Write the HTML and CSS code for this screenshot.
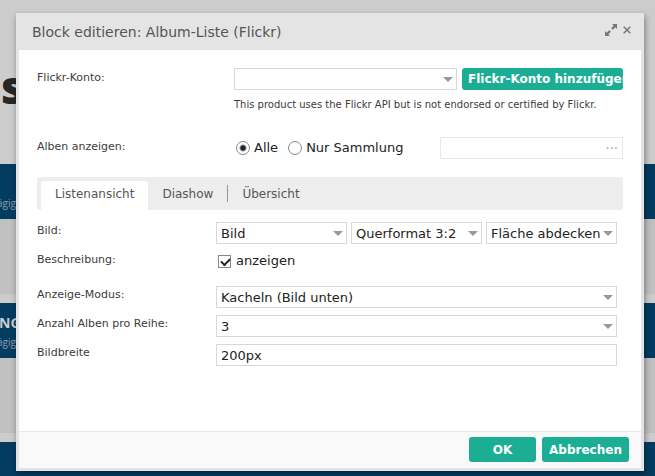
FILE: index.html
```html
<!DOCTYPE html>
<html lang="de">
<head>
<meta charset="utf-8">
<title>Block editieren: Album-Liste (Flickr)</title>
<link rel="stylesheet" href="styles.css">
</head>
<body>
<div class="page">
  <div class="page-head"><span class="page-title">s</span></div>
  <div class="band"><span class="band-text">ägig!</span></div>
  <div class="photo"></div>
  <div class="band"><b class="band-title">NG</b><span class="band-text">ägig.</span></div>
  <div class="photo"></div>
  <div class="band"></div>
</div>

<form class="dialog" role="dialog" aria-labelledby="dialog-title">
  <header class="dialog-head">
    <h1 class="dialog-title" id="dialog-title">Block editieren: Album-Liste (Flickr)</h1>
    <button class="icon-button" type="button" aria-label="Maximieren">
      <svg width="12" height="12" viewBox="0 0 12 12"><path d="M7 0h5v5zM0 7l5 5H0z" fill="#777"/><path d="M10 2L7 5M5 7l-3 3" stroke="#777" stroke-width="2.4"/></svg>
    </button>
    <button class="icon-button" type="button" aria-label="Schließen">
      <svg width="8" height="8" viewBox="0 0 8 8"><path d="M.7.7l6.6 6.6M7.3.7L.7 7.3" stroke="#777" stroke-width="1.5"/></svg>
    </button>
  </header>

  <main class="dialog-body">
    <section class="account">
      <label class="label" for="account">Flickr-Konto:</label>
      <div class="account-field">
        <div class="line">
          <span class="select grow"><select id="account"><option></option></select></span>
          <button class="button add-button" type="button">Flickr-Konto hinzufügen</button>
        </div>
        <p class="note">This product uses the Flickr API but is not endorsed or certified by Flickr.</p>
      </div>
      <span class="label" id="albums">Alben anzeigen:</span>
      <div class="line" role="radiogroup" aria-labelledby="albums">
        <label class="choice"><input class="radio" type="radio" name="albums" checked>Alle</label>
        <label class="choice"><input class="radio" type="radio" name="albums">Nur Sammlung</label>
        <input class="text picker" type="text" placeholder="···" aria-label="Sammlung">
      </div>
    </section>

    <nav class="tabs">
      <a class="tab active" href="#liste">Listenansicht</a>
      <a class="tab" href="#diashow">Diashow</a>
      <a class="tab divided" href="#uebersicht">Übersicht</a>
    </nav>

    <section class="options" id="liste">
      <label class="label" for="image">Bild:</label>
      <div class="line image-line">
        <span class="select"><select id="image"><option>Bild</option></select></span>
        <span class="select"><select aria-label="Format"><option>Querformat 3:2</option></select></span>
        <span class="select"><select aria-label="Skalierung"><option>Fläche abdecken</option></select></span>
      </div>
      <label class="label" for="description">Beschreibung:</label>
      <div class="line check-line">
        <input class="check" type="checkbox" id="description" checked>
        <label for="description">anzeigen</label>
      </div>
      <label class="label" for="mode">Anzeige-Modus:</label>
      <span class="select"><select id="mode"><option>Kacheln (Bild unten)</option></select></span>
      <label class="label" for="count">Anzahl Alben pro Reihe:</label>
      <span class="select"><select id="count"><option>3</option></select></span>
      <label class="label" for="width">Bildbreite</label>
      <input class="text" type="text" id="width" value="200px">
    </section>
  </main>

  <footer class="dialog-foot">
    <button class="button ok" type="button">OK</button>
    <button class="button cancel" type="button">Abbrechen</button>
  </footer>
</form>
</body>
</html>
```
FILE: styles.css
```css
* {
  box-sizing: border-box;
}

body {
  margin: 0;
  height: 100vh;
  overflow: hidden;
  position: relative;
  background: #ccc;
  color: #222;
  font: 13px/16px "DejaVu Sans", sans-serif;
}

button, input, select {
  font: inherit;
  color: inherit;
}

/* Page behind the dialog */
.page-head {
  height: 164px;
  padding: 62px 0 0 1px;
}

.page-title {
  font: 800 46px/48px "Open Sans", sans-serif;
  color: #262626;
}

.band {
  display: flex;
  flex-direction: column;
  justify-content: flex-end;
  height: 55px;
  padding-bottom: 8px;
  background: #033c61;
  color: #ccc;
  font-family: "Open Sans", sans-serif;
}

.band-title {
  font-size: 14px;
  line-height: 22px;
  text-indent: -1px;
}

.band-text {
  color: #8a9dac;
  font-size: 10px;
  line-height: 16px;
  text-indent: -3px;
}

.photo {
  height: 75px;
  margin-bottom: 9px;
  background: #c0c0c0;
}

/* Dialog */
.dialog {
  position: absolute;
  inset: 13px 11px 5px 16px;
  display: flex;
  flex-direction: column;
  padding: 0 3px 3px;
  background: #e4e4e4;
  box-shadow: 1px 3px 6px rgba(0, 0, 0, .4);
}

.dialog-head {
  display: flex;
  align-items: center;
  gap: 6px;
  height: 37px;
  padding: 0 10px 3px 13px;
}

.dialog-title {
  flex: 1;
  margin: 0;
  padding-top: 4px;
  color: #555;
  font-size: 14px;
  line-height: 18px;
  font-weight: normal;
}

.icon-button {
  display: flex;
  padding: 0;
  border: 0;
  background: none;
}

.dialog-body {
  flex: 1;
  padding: 18px;
  background: #fff;
}

.account,
.options {
  display: grid;
}

.account {
  grid-template-columns: 197px 1fr;
  row-gap: 25px;
}

.options {
  grid-template-columns: 179px 1fr;
  row-gap: 7px;
  padding: 12px 6px 0 0;
}

.label {
  padding-top: 2px;
  color: #3c3c3c;
  font-size: 11px;
}

.options .label {
  padding-top: 1px;
}

.line {
  display: flex;
  align-items: center;
  gap: 5px;
}

.note {
  margin: 7px 0 0;
  color: #3c3c3c;
  font-size: 10px;
  line-height: 15px;
}

.select {
  position: relative;
  display: block;
}

.grow {
  flex: 1;
}

.select::after {
  content: "";
  position: absolute;
  top: 9px;
  right: 4px;
  width: 10px;
  height: 5px;
  background: #999;
  clip-path: polygon(0 0, 100% 0, 50% 100%);
  pointer-events: none;
}

select,
.text {
  display: block;
  width: 100%;
  height: 22px;
  padding: 0 4px;
  border: 1px solid #d8d8d8;
  border-radius: 0;
  background: #fff;
  appearance: none;
}

.options select,
.options .text {
  padding-top: 1px;
}

.button {
  border: 0;
  border-radius: 3px;
  background: #1bae94;
  color: #fff;
  font-size: 12px;
  font-weight: bold;
}

.add-button {
  width: 161px;
  height: 22px;
  padding: 0 0 0 6px;
  overflow: hidden;
  white-space: nowrap;
  text-align: left;
}

.choice {
  display: flex;
  align-items: center;
  gap: 4px;
  margin-right: 3px;
  white-space: nowrap;
}

.radio,
.check {
  appearance: none;
  margin: 0;
  border: 1px solid #888;
  background: #fff;
}

.radio {
  width: 14px;
  height: 14px;
  margin-left: 2px;
  border-radius: 50%;
}

.radio:checked {
  background: radial-gradient(circle, #222 0 2px, #fff 4px);
}

.picker {
  width: 183px;
  margin-left: auto;
  border-color: #e8e8e8;
}

.picker::placeholder {
  color: #999;
  text-align: right;
  opacity: 1;
}

/* Tabs */
.tabs {
  display: flex;
  height: 33px;
  margin-top: 18px;
  padding: 4px 4px 0;
  border-radius: 3px;
  background: #ededed;
}

.tab {
  padding: 4px 14px 0;
  color: #555;
  font-size: 12px;
  line-height: 18px;
  text-decoration: none;
}

.active {
  border-radius: 3px 3px 0 0;
  background: #fff;
}

.divided {
  height: 17px;
  margin-top: 4px;
  padding-top: 0;
  border-left: 1px solid #999;
}

/* Options */
.image-line {
  gap: 4px;
}

.image-line .select {
  flex: 0 1 131px;
}

.check-line {
  height: 28px;
  padding: 2px 2px 0;
  align-items: flex-start;
}

.check {
  width: 13px;
  height: 13px;
  margin-top: 2px;
}

.check:checked::after {
  content: "";
  display: block;
  width: 7px;
  height: 4px;
  margin: 2px;
  border: solid #222;
  border-width: 0 0 2px 2px;
  transform: rotate(-45deg);
}

/* Footer */
.dialog-foot {
  display: flex;
  justify-content: flex-end;
  gap: 6px;
  height: 37px;
  padding: 5px 12px 6px;
  border-top: 1px solid #e8e8e8;
  background: #f9f9f9;
}

.ok {
  width: 67px;
}

.cancel {
  width: 87px;
  padding: 0;
}
```
